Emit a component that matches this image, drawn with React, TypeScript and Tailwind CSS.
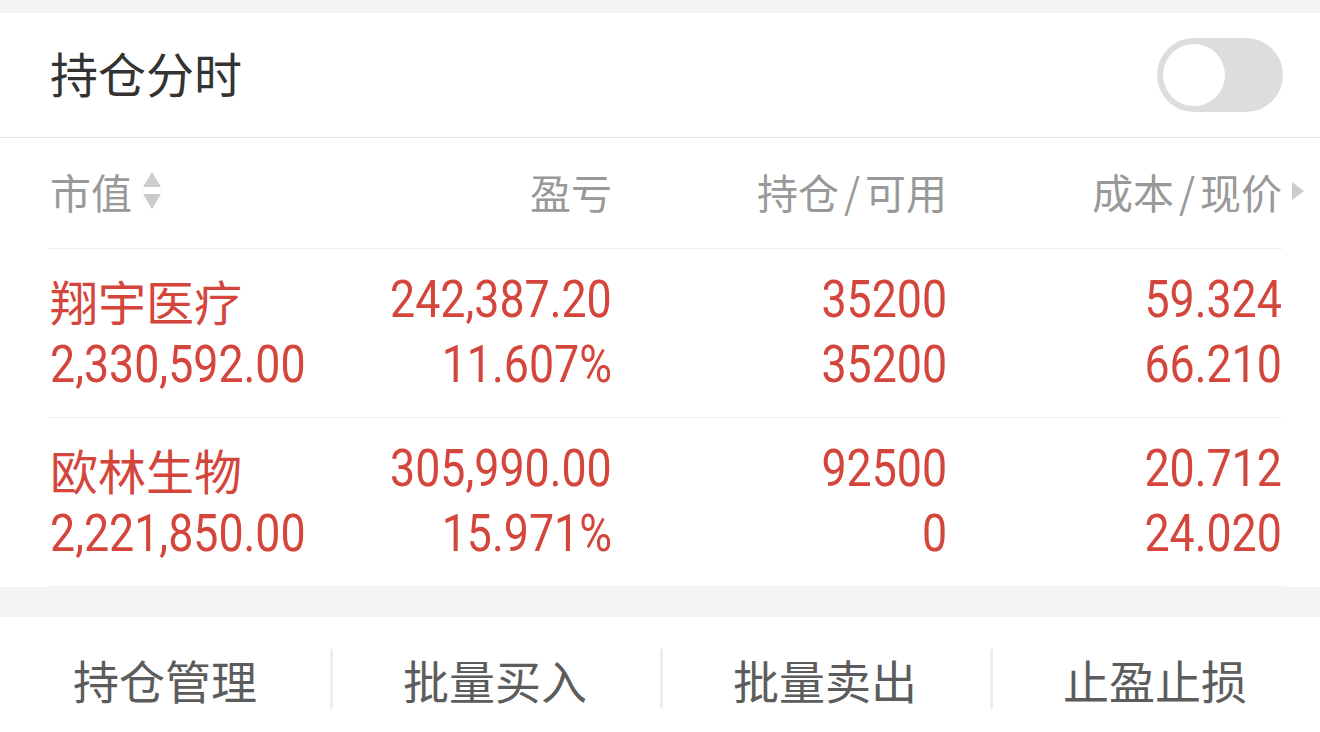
import React from "react";

const cjk = "font-['Noto_Sans_CJK_SC','Noto_Sans',sans-serif]";
const num = "font-['Roboto','Noto_Sans_CJK_SC',sans-serif]";

type Row = {
  name: string;
  value: string;
  pnl: string;
  pct: string;
  hold: string;
  avail: string;
  cost: string;
  price: string;
};

const rows: Row[] = [
  {
    name: "翔宇医疗",
    value: "2,330,592.00",
    pnl: "242,387.20",
    pct: "11.607%",
    hold: "35200",
    avail: "35200",
    cost: "59.324",
    price: "66.210",
  },
  {
    name: "欧林生物",
    value: "2,221,850.00",
    pnl: "305,990.00",
    pct: "15.971%",
    hold: "92500",
    avail: "0",
    cost: "20.712",
    price: "24.020",
  },
];

function Num({ children, left }: { children: React.ReactNode; left?: boolean }) {
  return (
    <span
      className={`${num} inline-block whitespace-nowrap text-[52px] leading-none scale-x-[0.86] ${
        left ? "origin-left" : "origin-right"
      }`}
    >
      {children}
    </span>
  );
}

function Line({ children, left }: { children: React.ReactNode; left?: boolean }) {
  return (
    <div className={`h-[65px] flex items-center whitespace-nowrap ${left ? "justify-start" : "justify-end"}`}>
      {children}
    </div>
  );
}

export default function App() {
  return (
    <div className={`w-[1320px] h-[732px] overflow-hidden bg-[#f4f4f4] pt-[13px] ${cjk}`}>
      <div className="bg-white">
        {/* title bar */}
        <div className="h-[125px] flex items-center justify-between pl-[50px] pr-[37px] border-b border-[#e6e6e6]">
          <span className={`${cjk} text-[48px] leading-none text-[#333333] pb-[6px]`}>持仓分时</span>
          <div className="relative w-[126px] h-[74px] rounded-full bg-[#dddddd]">
            <div className="absolute left-[6px] top-[6px] w-[62px] h-[62px] rounded-full bg-white" />
          </div>
        </div>

        {/* table */}
        <div className="pl-[48px] pr-[38px]">
          <div className="grid grid-cols-[minmax(0,1fr)_335px_335px_335px] h-[111px] items-center border-b border-[#eeeeee] text-[41px] leading-none text-[#999999] pb-[4px]">
            <div className="flex items-center pl-[2px]">
              <span>市值</span>
              <svg width="20" height="38" viewBox="0 0 20 38" className="ml-[10px]">
                <polygon points="10,0 19,15 1,15" fill="#cccccc" />
                <polygon points="1,22 19,22 10,37" fill="#cccccc" />
              </svg>
            </div>
            <div className="text-right">盈亏</div>
            <div className="text-right">
              持仓<span className="px-[5px]">/</span>可用
            </div>
            <div className="relative text-right">
              成本<span className="px-[5px]">/</span>现价
              <svg
                width="12"
                height="18"
                viewBox="0 0 12 18"
                className="absolute right-[-22px] top-1/2 -translate-y-1/2"
              >
                <polygon points="0,0 12,9 0,18" fill="#cccccc" />
              </svg>
            </div>
          </div>

          {rows.map((r) => (
            <div
              key={r.name}
              className="grid grid-cols-[minmax(0,1fr)_335px_335px_335px] pt-[18px] pb-[20px] border-b border-[#eeeeee] text-[#d4463c]"
            >
              <div className="pl-[2px]">
                <Line left>
                  <span className={`${cjk} text-[48px] leading-none`}>{r.name}</span>
                </Line>
                <Line left>
                  <Num left>{r.value}</Num>
                </Line>
              </div>
              <div>
                <Line>
                  <Num>{r.pnl}</Num>
                </Line>
                <Line>
                  <Num>{r.pct}</Num>
                </Line>
              </div>
              <div>
                <Line>
                  <Num>{r.hold}</Num>
                </Line>
                <Line>
                  <Num>{r.avail}</Num>
                </Line>
              </div>
              <div>
                <Line>
                  <Num>{r.cost}</Num>
                </Line>
                <Line>
                  <Num>{r.price}</Num>
                </Line>
              </div>
            </div>
          ))}
        </div>
      </div>

      {/* bottom actions */}
      <div className="mt-[30px] h-[116px] bg-white grid grid-cols-4 items-center">
        {["持仓管理", "批量买入", "批量卖出", "止盈止损"].map((t, i) => (
          <div key={t} className="relative h-full flex items-center justify-center">
            {i > 0 && (
              <div className="absolute left-0 top-[32px] w-[3px] h-[60px] bg-[#eeeeee]" />
            )}
            <span className={`${cjk} text-[46px] leading-none text-[#5c5c5c] pt-[8px]`}>{t}</span>
          </div>
        ))}
      </div>
    </div>
  );
}
